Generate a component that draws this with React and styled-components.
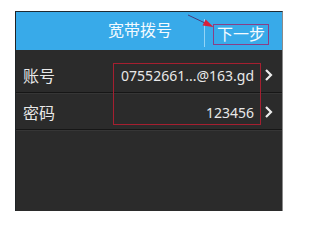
import React from 'react'
import styled, { createGlobalStyle } from 'styled-components'

const GlobalStyle = createGlobalStyle`
  html, body {
    margin: 0;
    padding: 0;
    background: #ffffff;
  }
  body {
    font-family: "Noto Sans", "Noto Sans CJK SC", sans-serif;
  }
`

const rows = [
  { label: '账号', value: '07552661...@163.gd' },
  { label: '密码', value: '123456' },
]

const App = () => {
  return (
    <Page>
      <GlobalStyle />
      <Screen>
        <Header>
          <Title>宽带拨号</Title>
          <Divider />
          <NextButton>下一步</NextButton>
          <Arrow width="30" height="18" viewBox="0 0 30 18">
            <line x1="1" y1="1" x2="18" y2="9" stroke="#4a3a7a" strokeWidth="1" />
            <polygon points="18.7,5.4 26.5,13 15.5,11.6" fill="#d8203a" />
          </Arrow>
        </Header>

        <List>
          {rows.map((r) => (
            <Row key={r.label}>
              <Label>{r.label}</Label>
              <Value>{r.value}</Value>
              <Chevron width="9" height="14" viewBox="0 0 9 14">
                <polyline points="2,2 7,7 2,12" fill="none" stroke="#ececec" strokeWidth="2.2" />
              </Chevron>
            </Row>
          ))}
          <Highlight />
        </List>
      </Screen>
    </Page>
  )
}

export default App

/* ---------------- layout ---------------- */

const Page = styled.div`
  width: 293px;
  height: 218px;
  padding: 11px 0 0 15px;
  box-sizing: border-box;
  background: #fff;
`

const Screen = styled.div`
  width: 268px;
  height: 200px;
  display: flex;
  flex-direction: column;
  background: #2b2b2b;
  border-left: 1px solid #1e2326;
  border-top: 1px solid #1e2a32;
  border-right: 1px solid #8a8a8a;
  box-sizing: border-box;
`

/* ---------------- header ---------------- */

const Header = styled.div`
  position: relative;
  height: 38px;
  display: flex;
  align-items: center;
  background: #38aae9;
  padding-right: 13px;
`

const Title = styled.div`
  flex: 1;
  padding-left: 60px;
  text-align: center;
  color: #f4faff;
  font-size: 16px;
  line-height: 20px;
  margin-top: -2px;
`

const Divider = styled.div`
  width: 1px;
  height: 28px;
  margin-top: 4px;
  background: #92d4f6;
  margin-right: 8px;
`

const NextButton = styled.div`
  color: #f4faff;
  font-size: 16px;
  line-height: 19px;
  padding: 0 3px;
  margin-top: 6px;
  border: 1px solid #8a3f86;
`

const Arrow = styled.svg`
  position: absolute;
  left: 171px;
  top: 2px;
`

/* ---------------- rows ---------------- */

const List = styled.div`
  position: relative;
  padding-top: 6px;
`

const Row = styled.div`
  height: 34px;
  display: flex;
  align-items: center;
  padding: 2px 9px 0 7px;
  border-bottom: 1px solid #161616;
  box-shadow: 0 1px 0 #363636;
  color: #e8e8e8;
`

const Label = styled.div`
  font-size: 16px;
  flex: 1;
`

const Value = styled.div`
  font-size: 14px;
  margin-right: 10px;
`

const Chevron = styled.svg`
  display: block;
`

const Highlight = styled.div`
  position: absolute;
  left: 97px;
  top: 13px;
  width: 148px;
  height: 62px;
  border: 1px solid #a51f30;
  box-sizing: border-box;
`
